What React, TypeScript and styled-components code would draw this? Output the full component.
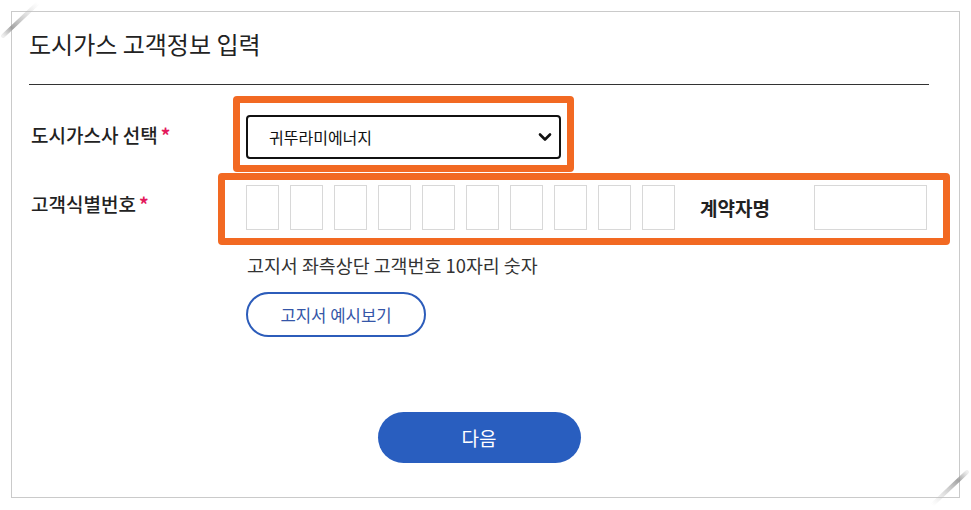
import React from "react";
import styled, { createGlobalStyle } from "styled-components";

const Global = createGlobalStyle`
  html, body { margin: 0; padding: 0; background: #fff; }
  body { font-family: "Noto Sans CJK KR", "Noto Sans", sans-serif; color: #222; }
  * { box-sizing: border-box; }
`;

const Page = styled.div`
  position: relative;
  width: 971px;
  height: 510px;
  padding: 11px 11px 12px 11px;
`;

const Panel = styled.section`
  width: 949px;
  height: 487px;
  border: 1px solid #cacaca;
  padding: 16px 30px 0 17px;
  display: flex;
  flex-direction: column;
`;

const Title = styled.h2`
  margin: 0;
  font-size: 24px;
  line-height: 32px;
  font-weight: 400;
  color: #222;
`;

const Divider = styled.hr`
  margin: 24px 0 0 0;
  border: 0;
  height: 1px;
  background: #333;
`;

const Row = styled.div<{ $top: number }>`
  display: flex;
  align-items: center;
  margin-top: ${(p) => p.$top}px;
`;

const Label = styled.div<{ $mt: number; $mb: number }>`
  width: 217px;
  flex: none;
  padding-left: 2px;
  font-size: 19px;
  line-height: 26px;
  font-weight: 500;
  color: #222;
  margin-top: ${(p) => p.$mt}px;
  margin-bottom: ${(p) => p.$mb}px;
`;

const Required = styled.span`
  color: #e3195c;
  font-weight: 700;
  margin-left: 3px;
`;

const Highlight = styled.div<{ $shift: number; $pad: string; $w: number }>`
  flex: none;
  width: ${(p) => p.$w}px;
  margin-left: ${(p) => -p.$shift}px;
  border: 7px solid #f26922;
  border-radius: 4px;
  padding: ${(p) => p.$pad};
  display: flex;
  align-items: center;
`;

const SelectBox = styled.div`
  width: 315px;
  height: 44px;
  border: 2px solid #111;
  border-radius: 4px;
  display: flex;
  align-items: center;
  justify-content: space-between;
  padding: 0 7px 0 21px;
  font-size: 16px;
  color: #111;
`;

const DigitGroup = styled.div`
  display: flex;
  gap: 11px;
`;

const Cell = styled.div<{ $w: number }>`
  flex: none;
  width: ${(p) => p.$w}px;
  height: 45px;
  border: 1px solid #d8d8d8;
  background: #fff;
`;

const NameLabel = styled.div`
  margin-left: 25px;
  font-size: 19px;
  font-weight: 700;
  color: #222;
  line-height: 26px;
`;

const NameCell = styled(Cell)`
  margin-left: auto;
`;

const Helper = styled.div`
  margin: 7px 0 0 218px;
  font-size: 18.4px;
  line-height: 26px;
  color: #333;
`;

const OutlineButton = styled.button`
  margin: 14px 0 0 217px;
  width: 180px;
  height: 45px;
  border: 2px solid #2c5cba;
  border-radius: 23px;
  background: #fff;
  color: #3556a8;
  font-family: inherit;
  font-size: 16.7px;
  padding: 0;
  align-self: flex-start;
`;

const PrimaryButton = styled.button`
  margin-top: 75px;
  align-self: center;
  width: 203px;
  height: 51px;
  border: 0;
  border-radius: 26px;
  background: #295ebf;
  color: #fff;
  font-family: inherit;
  font-size: 19px;
  padding: 0;
`;

const Corner = styled.svg<{ $pos: "tl" | "br" }>`
  position: absolute;
  width: 42px;
  height: 42px;
  ${(p) => (p.$pos === "tl" ? "left: 0; top: 0;" : "left: 929px; top: 468px;")}
  pointer-events: none;
`;

const Chevron = () => (
  <svg width="14" height="10" viewBox="0 0 14 10">
    <path d="M2 2.5 L7 7.5 L12 2.5" fill="none" stroke="#111" strokeWidth="2.6" strokeLinecap="round" strokeLinejoin="round" />
  </svg>
);

export default function App() {
  return (
    <>
      <Global />
      <Page>
        <Corner $pos="tl" viewBox="0 0 42 42">
          <defs>
            <linearGradient id="gtl" x1="0" y1="1" x2="1" y2="0">
              <stop offset="0" stopColor="#aaa" stopOpacity="0.2" />
              <stop offset="0.25" stopColor="#999" stopOpacity="0.9" />
              <stop offset="1" stopColor="#ccc" stopOpacity="0" />
            </linearGradient>
            <filter id="blur1"><feGaussianBlur stdDeviation="0.7" /></filter>
          </defs>
          <line x1="3" y1="36" x2="38" y2="3" stroke="url(#gtl)" strokeWidth="4" strokeLinecap="round" filter="url(#blur1)" />
        </Corner>
        <Corner $pos="br" viewBox="0 0 42 42">
          <defs>
            <linearGradient id="gbr" x1="0" y1="1" x2="1" y2="0">
              <stop offset="0" stopColor="#ccc" stopOpacity="0" />
              <stop offset="0.75" stopColor="#999" stopOpacity="0.9" />
              <stop offset="1" stopColor="#aaa" stopOpacity="0.2" />
            </linearGradient>
            <filter id="blur2"><feGaussianBlur stdDeviation="0.7" /></filter>
          </defs>
          <line x1="3" y1="37" x2="38" y2="4" stroke="url(#gbr)" strokeWidth="4" strokeLinecap="round" filter="url(#blur2)" />
        </Corner>
        <Panel>
          <Title>도시가스 고객정보 입력</Title>
          <Divider />
          <Row $top={11}>
            <Label $mt={2} $mb={0}>
              도시가스사 선택<Required>*</Required>
            </Label>
            <Highlight $shift={13} $w={341} $pad="12px 6px 6px 6px">
              <SelectBox>
                <span>귀뚜라미에너지</span>
                <Chevron />
              </SelectBox>
            </Highlight>
          </Row>
          <Row $top={1}>
            <Label $mt={0} $mb={10}>
              고객식별번호<Required>*</Required>
            </Label>
            <Highlight $shift={28} $w={732} $pad="5px 16px 8px 21px">
              <DigitGroup>
                {Array.from({ length: 10 }).map((_, i) => (
                  <Cell key={i} $w={33} />
                ))}
              </DigitGroup>
              <NameLabel>계약자명</NameLabel>
              <NameCell $w={113} />
            </Highlight>
          </Row>
          <Helper>고지서 좌측상단 고객번호 10자리 숫자</Helper>
          <OutlineButton>고지서 예시보기</OutlineButton>
          <PrimaryButton>다음</PrimaryButton>
        </Panel>
      </Page>
    </>
  );
}
